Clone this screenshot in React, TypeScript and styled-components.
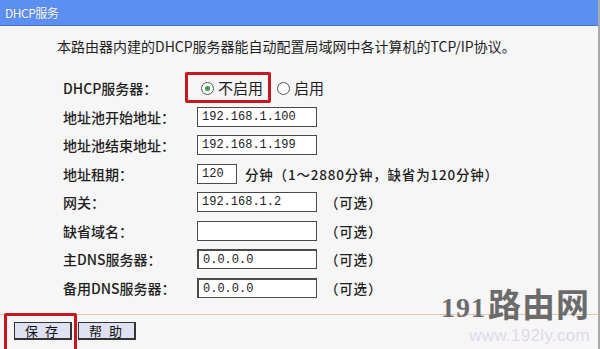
import React from 'react';
import styled, { createGlobalStyle } from 'styled-components';

const GlobalStyle = createGlobalStyle`
  html, body {
    margin: 0;
    padding: 0;
    background: #f5f5f5;
  }
  body {
    font-family: "Noto Sans CJK SC", "Noto Sans", sans-serif;
  }
`;

type Row = {
  label: string;
  kind: 'input' | 'lease';
  value?: string;
  optional?: boolean;
  inset?: boolean;
};

const rows: Row[] = [
  { label: '地址池开始地址：', kind: 'input', value: '192.168.1.100' },
  { label: '地址池结束地址：', kind: 'input', value: '192.168.1.199' },
  { label: '地址租期：', kind: 'lease', value: '120' },
  { label: '网关：', kind: 'input', value: '192.168.1.2', optional: true },
  { label: '缺省域名：', kind: 'input', value: '', optional: true },
  { label: '主DNS服务器：', kind: 'input', value: '0.0.0.0', optional: true, inset: true },
  { label: '备用DNS服务器：', kind: 'input', value: '0.0.0.0', optional: true, inset: true },
];

export default function App() {
  return (
    <Page>
      <GlobalStyle />
      {/* Title bar */}
      <TitleBar>DHCP服务</TitleBar>

      {/* Description */}
      <Intro>本路由器内建的DHCP服务器能自动配置局域网中各计算机的TCP/IP协议。</Intro>

      {/* Settings */}
      <Form>
        <Label>DHCP服务器：</Label>
        <Field>
          <RadioOption>
            <Highlight $top={-7} $left={-16} $right={-8} $bottom={-6} />
            <Radio $checked />
            <RadioText>不启用</RadioText>
          </RadioOption>
          <RadioOption>
            <Radio />
            <RadioText>启用</RadioText>
          </RadioOption>
        </Field>

        {rows.map(row => (
          <React.Fragment key={row.label}>
            <Label>{row.label}</Label>
            <Field>
              <TextBox $width={row.kind === 'lease' ? 40 : 120} $inset={row.inset}>
                {row.value}
              </TextBox>
              {row.kind === 'lease' && <Note $gap={8}>分钟（1～2880分钟，缺省为120分钟）</Note>}
              {row.optional && <Note $gap={8}>（可选）</Note>}
            </Field>
          </React.Fragment>
        ))}
      </Form>

      {/* Footer */}
      <Footer>
        <ButtonWrap>
          <Highlight $top={-9} $left={-10} $right={-5} $bottom={-14} />
          <Button>保 存</Button>
        </ButtonWrap>
        <Button>帮 助</Button>
      </Footer>

      {/* Watermark */}
      <Watermark>
        <Brand>
          <BrandDigits>191</BrandDigits>路由网
        </Brand>
        <BrandUrl>www.192ly.com</BrandUrl>
      </Watermark>
    </Page>
  );
}

const Page = styled.div`
  position: relative;
  width: 598px;
  height: 349px;
  overflow: hidden;
  background: #f6f6f6;
  border-right: 2px solid #a9a9a9;
  color: #1e1e1e;
`;

const TitleBar = styled.div`
  height: 25px;
  line-height: 25px;
  padding-left: 5px;
  background: #5b8ff1;
  border-bottom: 1px solid #4a76c9;
  color: #ffffff;
  font-size: 12px;
  letter-spacing: -0.5px;
  text-shadow: 0 0 1px rgba(0, 0, 0, 0.3);
`;

const Intro = styled.div`
  padding: 10px 0 0 57px;
  height: 20px;
  margin-bottom: 18px;
  line-height: 20px;
  font-size: 14px;
  white-space: nowrap;
`;

const Form = styled.div`
  display: grid;
  grid-template-columns: 134px 1fr;
  grid-auto-rows: 28.5px;
  padding-left: 63px;
`;

const Label = styled.div`
  display: flex;
  align-items: center;
  font-size: 14px;
  font-weight: 500;
  white-space: nowrap;
`;

const Field = styled.div`
  display: flex;
  align-items: center;
`;

const RadioOption = styled.label`
  position: relative;
  display: flex;
  align-items: center;
  height: 18px;
  margin-left: 4px;
  margin-right: 10px;
`;

const Radio = styled.span<{ $checked?: boolean }>`
  position: relative;
  width: 11px;
  height: 11px;
  border: 1px solid #555;
  border-radius: 50%;
  background: #fff;
  box-sizing: content-box;

  &::after {
    content: '';
    display: ${p => (p.$checked ? 'block' : 'none')};
    position: absolute;
    left: 3px;
    top: 3px;
    width: 5px;
    height: 5px;
    border-radius: 50%;
    background: #3f9a4a;
  }
`;

const RadioText = styled.span`
  margin-left: 4px;
  font-size: 15px;
  line-height: 18px;
`;

const Highlight = styled.span<{ $top: number; $left: number; $right: number; $bottom: number }>`
  position: absolute;
  top: ${p => p.$top}px;
  left: ${p => p.$left}px;
  right: ${p => p.$right}px;
  bottom: ${p => p.$bottom}px;
  border: 3px solid #c8171f;
  border-radius: 2px;
  pointer-events: none;
`;

const TextBox = styled.div<{ $width: number; $inset?: boolean }>`
  width: ${p => p.$width}px;
  height: 20px;
  box-sizing: border-box;
  padding-left: 4px;
  background: #fff;
  border: 1px solid #4a4a4a;
  border-top-width: ${p => (p.$inset ? 2 : 1)}px;
  border-left-width: ${p => (p.$inset ? 2 : 1)}px;
  font-family: "Liberation Mono", "DejaVu Sans Mono", monospace;
  font-size: 12px;
  line-height: 18px;
  color: #222;
`;

const Note = styled.span<{ $gap: number }>`
  margin-left: ${p => p.$gap}px;
  font-size: 13.5px;
  font-weight: 500;
  letter-spacing: 0.8px;
  white-space: nowrap;
`;

const Footer = styled.div`
  display: flex;
  align-items: center;
  gap: 6px;
  margin-top: 12px;
  padding: 7px 0 0 14px;
  border-top: 1px solid #e6c6a6;
`;

const ButtonWrap = styled.span`
  position: relative;
  display: inline-flex;
`;

const Button = styled.button`
  width: 58px;
  height: 18px;
  padding: 0;
  background: #dfe1f3;
  border: 1px solid #333;
  border-right-width: 2px;
  border-bottom-width: 2px;
  font-family: "Noto Sans CJK SC", sans-serif;
  font-size: 13px;
  line-height: 14px;
  letter-spacing: 2px;
  color: #111;

  & + & {
    width: 52px;
  }
`;

const Watermark = styled.div`
  position: absolute;
  right: 8px;
  bottom: 5px;
  display: flex;
  flex-direction: column;
  align-items: flex-end;
`;

const Brand = styled.div`
  font-family: "Noto Sans CJK SC", sans-serif;
  font-size: 33px;
  font-weight: 700;
  line-height: 32px;
  color: #6b6b6b;
  letter-spacing: 1px;
`;

const BrandDigits = styled.span`
  font-family: "Liberation Serif", serif;
  font-size: 28px;
  letter-spacing: 1px;
  margin-right: 2px;
`;

const BrandUrl = styled.div`
  margin-top: 4px;
  font-family: "Liberation Sans", Arial, sans-serif;
  font-size: 17px;
  line-height: 16px;
  color: #e2d6ec;
  letter-spacing: 0.3px;
`;
